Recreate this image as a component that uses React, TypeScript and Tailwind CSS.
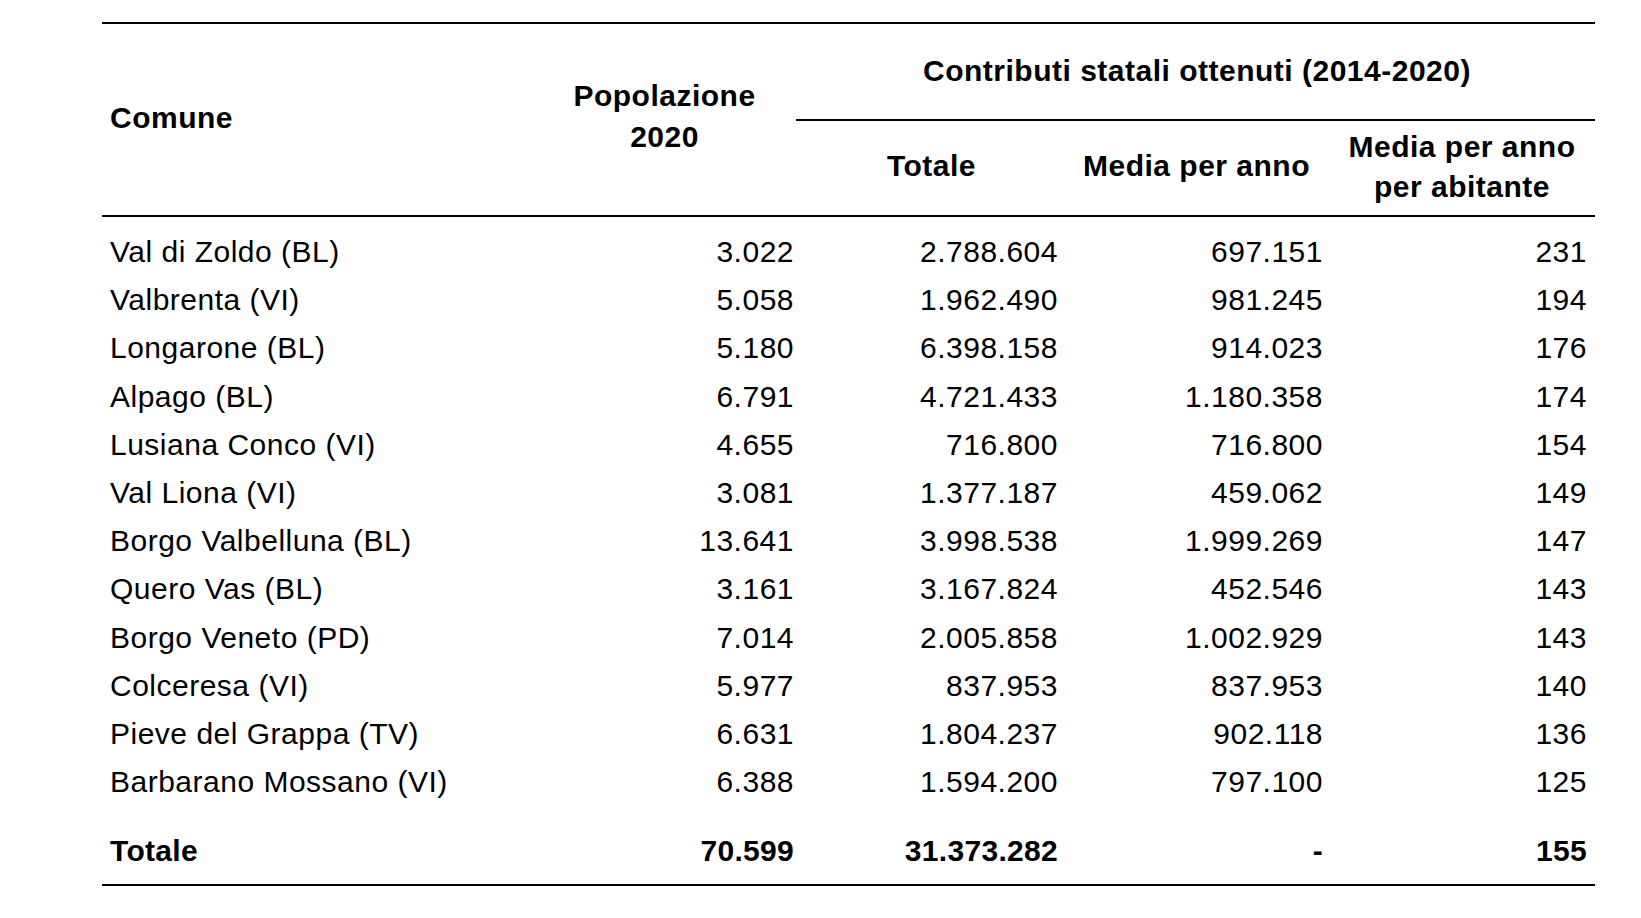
const rows: [string, string, string, string, string][] = [
  ["Val di Zoldo (BL)", "3.022", "2.788.604", "697.151", "231"],
  ["Valbrenta (VI)", "5.058", "1.962.490", "981.245", "194"],
  ["Longarone (BL)", "5.180", "6.398.158", "914.023", "176"],
  ["Alpago (BL)", "6.791", "4.721.433", "1.180.358", "174"],
  ["Lusiana Conco (VI)", "4.655", "716.800", "716.800", "154"],
  ["Val Liona (VI)", "3.081", "1.377.187", "459.062", "149"],
  ["Borgo Valbelluna (BL)", "13.641", "3.998.538", "1.999.269", "147"],
  ["Quero Vas (BL)", "3.161", "3.167.824", "452.546", "143"],
  ["Borgo Veneto (PD)", "7.014", "2.005.858", "1.002.929", "143"],
  ["Colceresa (VI)", "5.977", "837.953", "837.953", "140"],
  ["Pieve del Grappa (TV)", "6.631", "1.804.237", "902.118", "136"],
  ["Barbarano Mossano (VI)", "6.388", "1.594.200", "797.100", "125"],
];

const cols = "grid grid-cols-[428px_269px_265px_265px_266px]";

export default function App() {
  return (
    <main className="min-h-screen w-full bg-white text-black font-['Liberation_Sans',Arial,sans-serif]">
      <div className="pt-[22px] pl-[102px]">
        <div className="w-[1493px]">
          {/* header */}
          <div
            className={`${cols} grid-rows-[95px_2px_94px] border-t-2 border-b-2 border-black text-[30px] font-bold tracking-[0.5px]`}
          >
            <div className="row-span-3 flex items-center pb-[5px] pl-2">Comune</div>
            <div className="row-span-3 flex items-center justify-center pb-[7px] text-center leading-[41px]">
              Popolazione
              <br />
              2020
            </div>
            <div className="col-span-3 flex items-center justify-center pb-[3px]">
              Contributi statali ottenuti (2014-2020)
            </div>
            <div className="col-span-3 -ml-[3px] bg-black" />
            <div className="flex items-center justify-center pb-[6px]">Totale</div>
            <div className="flex items-center justify-center pb-[6px]">Media per anno</div>
            <div className="flex items-center justify-center pb-[3px] text-center leading-[40px]">
              Media per anno
              <br />
              per abitante
            </div>
          </div>

          {/* body */}
          <div className="pt-[11px] text-[30px] leading-none tracking-[0.5px]">
            {rows.map((r) => (
              <div key={r[0]} className={`${cols} h-[48.2px] items-center`}>
                <div className="pl-2">{r[0]}</div>
                <div className="pr-[5px] text-right">{r[1]}</div>
                <div className="pr-[6px] text-right">{r[2]}</div>
                <div className="pr-[6px] text-right">{r[3]}</div>
                <div className="pr-2 text-right">{r[4]}</div>
              </div>
            ))}
          </div>

          {/* total */}
          <div
            className={`${cols} mt-[21px] h-[59px] items-center border-b-2 border-black pb-[10px] text-[30px] font-bold leading-none tracking-[0.3px]`}
          >
            <div className="pl-2">Totale</div>
            <div className="pr-[5px] text-right">70.599</div>
            <div className="pr-[6px] text-right">31.373.282</div>
            <div className="pr-[6px] text-right">-</div>
            <div className="pr-2 text-right">155</div>
          </div>
        </div>
      </div>
    </main>
  );
}
